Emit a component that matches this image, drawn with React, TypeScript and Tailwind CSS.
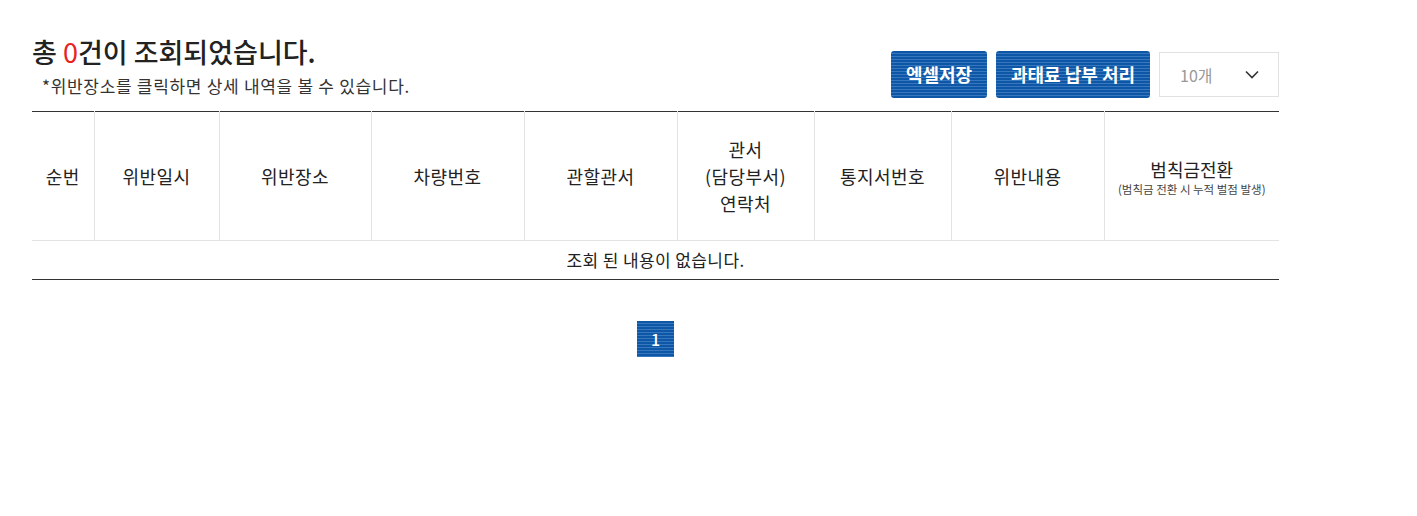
const columns = [
  { label: "순번", width: "w-[62px]" },
  { label: "위반일시", width: "w-[125px]" },
  { label: "위반장소", width: "w-[152px]" },
  { label: "차량번호", width: "w-[153px]" },
  { label: "관할관서", width: "w-[153px]" },
  { label: "관서\n(담당부서)\n연락처", width: "w-[137px]" },
  { label: "통지서번호", width: "w-[137px]" },
  { label: "위반내용", width: "w-[153px]" },
];

const stripe =
  "bg-[repeating-linear-gradient(180deg,#0d57a6_0px,#0d57a6_2px,#3677bd_2px,#3677bd_3px)]";

export default function App() {
  return (
    <div className="min-h-screen bg-white font-['Noto_Sans_CJK_KR',sans-serif] text-[#222]">
      <div className="w-[1247px] ml-[32px] pt-[36px]">
        {/* Header */}
        <div className="flex items-start justify-between">
          <div>
            <h2 className="text-[27px] font-medium leading-[32px]">
              총 <span className="text-[#e8231f] font-normal">0</span>건이 조회되었습니다.
            </h2>
            <p className="mt-[7px] ml-[10px] text-[17px] leading-[22px] text-[#333] tracking-[0.7px]">
              *위반장소를 클릭하면 상세 내역을 볼 수 있습니다.
            </p>
          </div>
          <div className="flex items-center gap-[9px] mt-[15px]">
            <button
              className={`h-[47px] w-[96px] rounded-[3px] text-white text-[18px] font-bold ${stripe}`}
            >
              엑셀저장
            </button>
            <button
              className={`h-[47px] w-[154px] rounded-[3px] text-white text-[18px] font-bold ${stripe}`}
            >
              과태료 납부 처리
            </button>
            <div className="h-[45px] w-[120px] border border-[#e1e1e1] flex items-center justify-between pl-[20px] pr-[19px] text-[16px] text-[#999]">
              <span>10개</span>
              <svg width="14" height="9" viewBox="0 0 14 9" fill="none">
                <polyline points="1,1.5 7,7.5 13,1.5" stroke="#333" strokeWidth="1.6" />
              </svg>
            </div>
          </div>
        </div>

        {/* Table */}
        <table className="mt-[13px] w-full border-collapse border-t border-b border-[#333] table-fixed">
          <thead>
            <tr className="h-[129px] border-b border-[#e3e3e3]">
              {columns.map((col) => (
                <th
                  key={col.label}
                  className={`${col.width} font-normal text-[18px] leading-[27px] tracking-[0.4px] text-[#222] border-r border-[#e3e3e3] whitespace-pre-line`}
                >
                  {col.label}
                </th>
              ))}
              <th className="font-normal text-[18px] text-[#222]">
                <div className="leading-[26px]">범칙금전환</div>
                <div className="text-[11.5px] leading-[14px] text-[#444]">
                  (범칙금 전환 시 누적 벌점 발생)
                </div>
              </th>
            </tr>
          </thead>
          <tbody>
            <tr className="h-[39px]">
              <td colSpan={9} className="text-center text-[17px] leading-[24px] tracking-[0.4px] text-[#222]">
                조회 된 내용이 없습니다.
              </td>
            </tr>
          </tbody>
        </table>

        {/* Pagination */}
        <div className="flex justify-center mt-[41px]">
          <button
            className={`w-[37px] h-[36px] text-white text-[16px] font-medium ${stripe}`}
          >
            1
          </button>
        </div>
      </div>
    </div>
  );
}
